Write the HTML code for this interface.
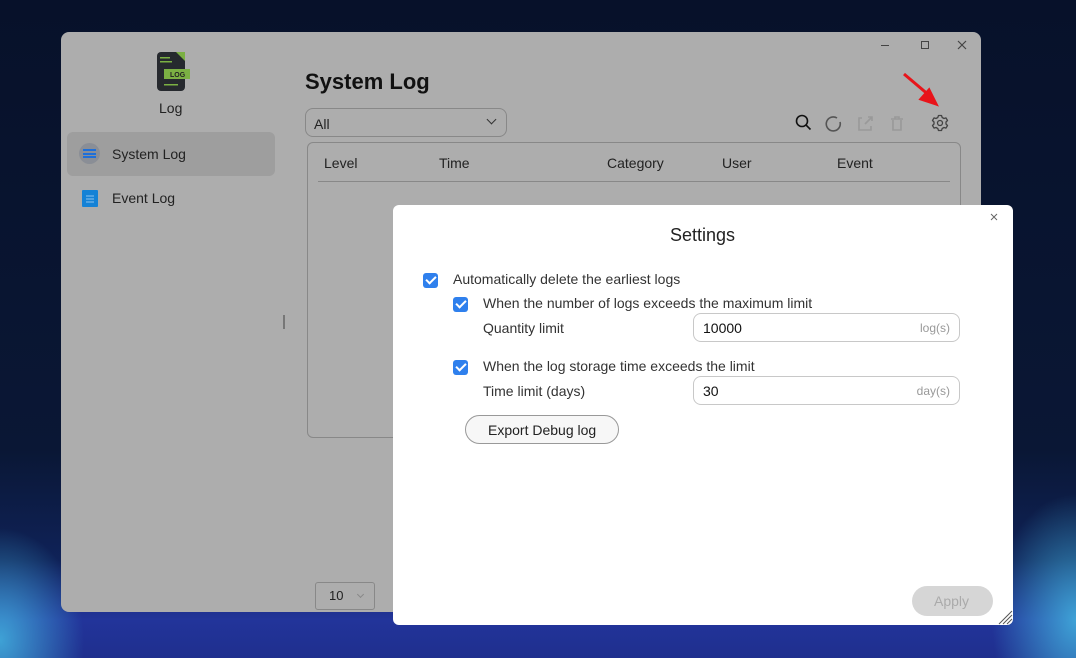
<!DOCTYPE html>
<html><head><style>
*{box-sizing:border-box;margin:0;padding:0}
body{width:1076px;height:658px;overflow:hidden;position:relative;font-family:"Liberation Sans",sans-serif;
background:
radial-gradient(ellipse 120px 160px at 0px 640px,rgba(70,190,230,0.8),rgba(70,190,230,0) 70%),
radial-gradient(ellipse 120px 180px at 1076px 620px,rgba(70,190,230,0.8),rgba(70,190,230,0) 70%),
linear-gradient(#07112a 0px,#0a1735 450px,#0f2258 560px,#22349a 620px,#1f2f8e 658px);}
.win{position:absolute;left:61px;top:32px;width:920px;height:580px;background:#adadad;border-radius:8px;}
.t{position:absolute;color:#222;white-space:nowrap}
.dlg{position:absolute;left:393px;top:205px;width:620px;height:420px;background:#fff;border-radius:6px}
.cb{position:absolute;width:15px;height:15px;background:#2f80ed;border-radius:3px}
.cb:after{content:"";position:absolute;left:3px;top:3px;width:8px;height:4px;border-left:2px solid #fff;border-bottom:2px solid #fff;transform:rotate(-45deg)}
.inp{position:absolute;left:693px;width:267px;height:29px;border:1px solid #c8c8c8;border-radius:8px;background:#fff}
.inp span{position:absolute;left:9px;top:6px;font-size:14px;color:#111}
.inp i{position:absolute;right:9px;top:7px;font-size:12px;color:#999;font-style:normal}
</style></head><body>
<div class="win">
 <div style="position:absolute;left:820px;top:13px;width:8px;height:1px;background:#444"></div>
 <div style="position:absolute;left:860px;top:9px;width:8px;height:8px;border:1px solid #444"></div>
 <svg style="position:absolute;left:896px;top:8px" width="10" height="10"><path d="M1 1l8 8M9 1l-8 8" stroke="#444" stroke-width="1.2"/></svg>
 <svg style="position:absolute;left:95px;top:19px" width="36" height="42"><rect x="1" y="1" width="28" height="39" rx="4" fill="#26292e"/><polygon points="20,1 29,10 29,1" fill="#7bb043"/><rect x="8" y="18" width="26" height="10" fill="#7bb043"/><text x="14" y="26" font-size="7" font-family="Liberation Sans" fill="#222" font-weight="bold">LOG</text><rect x="4" y="6" width="10" height="1.5" fill="#7bb043"/><rect x="4" y="10" width="12" height="1.5" fill="#7bb043"/><rect x="8" y="33" width="14" height="1.5" fill="#7bb043"/></svg>
 <div class="t" style="left:98px;top:68px;font-size:14px">Log</div>
 <div style="position:absolute;left:6px;top:100px;width:208px;height:44px;background:#9e9e9e;border-radius:6px"></div>
 <div style="position:absolute;left:18px;top:111px;width:21px;height:21px;border-radius:50%;background:#8a8e96"></div>
 <div style="position:absolute;left:22px;top:117px;width:13px;height:9px;border-top:2px solid #1e6fd9;border-bottom:2px solid #1e6fd9"></div>
 <div style="position:absolute;left:22px;top:121px;width:13px;height:2px;background:#1e6fd9"></div>
 <div class="t" style="left:51px;top:114px;font-size:14px">System Log</div>
 <div style="position:absolute;left:21px;top:158px;width:16px;height:17px;background:#1582d6;border-radius:1px"></div>
 <svg style="position:absolute;left:21px;top:158px" width="16" height="17"><path d="M4 6h8M4 9h8M4 12h8" stroke="#8fc4ee" stroke-width="1"/></svg>
 <div class="t" style="left:51px;top:158px;font-size:14px">Event Log</div>
 <div style="position:absolute;left:222px;top:283px;width:2px;height:14px;border-left:1px solid #777;border-right:1px solid #777"></div>
 <div class="t" style="left:244px;top:37px;font-size:22px;font-weight:bold;color:#111">System Log</div>
 <div style="position:absolute;left:244px;top:76px;width:202px;height:29px;border:1px solid #888;border-radius:8px"></div>
 <div class="t" style="left:253px;top:84px;font-size:14px">All</div>
 <div style="position:absolute;left:427px;top:84px;width:7px;height:7px;border-right:1.5px solid #333;border-bottom:1.5px solid #333;transform:rotate(45deg)"></div>
 <svg style="position:absolute;left:733px;top:81px" width="160" height="22" fill="none" stroke-width="1.6">
  <circle cx="8" cy="8" r="5.5" stroke="#111"/><path d="M12 12l4.5 4.5" stroke="#111"/>
  <path d="M43 5a7 7 0 1 0 3 4" stroke="#555"/>
  <path d="M68 5h-3v12h12v-4M71 11l7-7M74 4h4v4" stroke="#999"/>
  <path d="M97 6h12M101 6v-2h4v2M99 7v10h8v-10" stroke="#999"/>
  <circle cx="146" cy="10" r="2.5" stroke="#444" stroke-width="1.3"/>
  <path d="M144.5 2.5h3l.7 2 1.8 1 2-.6 1.5 2.6-1.5 1.5v2l1.5 1.5-1.5 2.6-2-.6-1.8 1-.7 2h-3l-.7-2-1.8-1-2 .6-1.5-2.6 1.5-1.5v-2l-1.5-1.5 1.5-2.6 2 .6 1.8-1z" stroke="#444" stroke-width="1.3" stroke-linejoin="round"/>
 </svg>
 <div style="position:absolute;left:246px;top:110px;width:654px;height:296px;border:1px solid #888;border-radius:6px"></div>
 <div class="t" style="left:263px;top:123px;font-size:14px">Level</div>
 <div class="t" style="left:378px;top:123px;font-size:14px">Time</div>
 <div class="t" style="left:546px;top:123px;font-size:14px">Category</div>
 <div class="t" style="left:661px;top:123px;font-size:14px">User</div>
 <div class="t" style="left:776px;top:123px;font-size:14px">Event</div>
 <div style="position:absolute;left:257px;top:149px;width:632px;height:1px;background:#888"></div>
 <div style="position:absolute;left:254px;top:550px;width:60px;height:28px;border:1px solid #888;border-radius:3px"></div>
 <div class="t" style="left:268px;top:556px;font-size:13px">10</div>
 <div style="position:absolute;left:297px;top:560px;width:5px;height:5px;border-right:1px solid #888;border-bottom:1px solid #888;transform:rotate(45deg)"></div>
</div>
<svg style="position:absolute;left:0;top:0" width="1076" height="658"><g stroke="#e8141a" stroke-width="3" fill="#e8141a"><path d="M904 74l26 22"/><polygon points="936,104 921,99 929,90"/><path d="M668 478l-38 -22"/><polygon points="622,451 637,452 631,462"/></g></svg>
<div class="dlg">
 <svg style="position:absolute;left:597px;top:8px" width="8" height="8"><path d="M1 1l6 6M7 1l-6 6" stroke="#666" stroke-width="1"/></svg>
 <div class="t" style="left:277px;top:20px;font-size:18px">Settings</div>
 <div class="cb" style="left:30px;top:68px"></div>
 <div class="t" style="left:60px;top:66px;font-size:14px;color:#333">Automatically delete the earliest logs</div>
 <div class="cb" style="left:60px;top:92px"></div>
 <div class="t" style="left:90px;top:90px;font-size:14px;color:#333">When the number of logs exceeds the maximum limit</div>
 <div class="t" style="left:90px;top:115px;font-size:14px;color:#333">Quantity limit</div>
 <div class="cb" style="left:60px;top:155px"></div>
 <div class="t" style="left:90px;top:153px;font-size:14px;color:#333">When the log storage time exceeds the limit</div>
 <div class="t" style="left:90px;top:178px;font-size:14px;color:#333">Time limit (days)</div>
 <div style="position:absolute;left:72px;top:210px;width:154px;height:29px;border:1px solid #999;border-radius:15px;background:#f7f7f7"></div>
 <div class="t" style="left:95px;top:217px;font-size:14px">Export Debug log</div>
 <div style="position:absolute;left:519px;top:381px;width:81px;height:30px;border-radius:15px;background:#d6d6d6"></div>
 <div class="t" style="left:541px;top:388px;font-size:14px;color:#aaa">Apply</div>
 <svg style="position:absolute;left:604px;top:404px" width="16" height="16"><path d="M2 15L15 2M6 15L15 6M10 15L15 10" stroke="#555" stroke-width="1"/></svg>
</div>
<div class="inp" style="top:313px"><span>10000</span><i>log(s)</i></div>
<div class="inp" style="top:376px"><span>30</span><i>day(s)</i></div>
</body></html>
